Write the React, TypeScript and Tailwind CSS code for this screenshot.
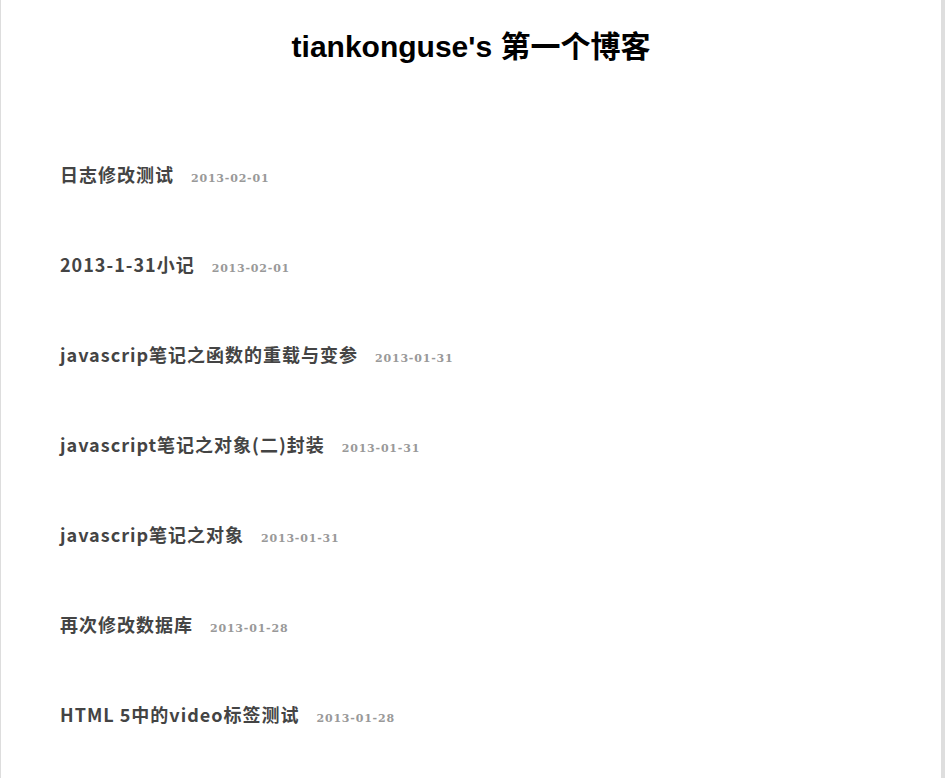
import { memo, VFC } from 'react';

const posts = [
  { title: '日志修改测试', date: '2013-02-01' },
  { title: '2013-1-31小记', date: '2013-02-01' },
  { title: 'javascrip笔记之函数的重载与变参', date: '2013-01-31' },
  { title: 'javascript笔记之对象(二)封装', date: '2013-01-31' },
  { title: 'javascrip笔记之对象', date: '2013-01-31' },
  { title: '再次修改数据库', date: '2013-01-28' },
  { title: 'HTML 5中的video标签测试', date: '2013-01-28' },
];

const PostItem: VFC<{ title: string; date: string }> = memo(({ title, date }) => (
  <li className="flex h-[90px] items-center">
    <div className="flex items-baseline">
      <a
        href="#"
        className="text-[18px] font-bold text-[#444] tracking-[1px] [font-family:'Noto_Sans_CJK_SC','Noto_Sans',sans-serif]"
      >
        {title}
      </a>
      <span className="ml-[17px] text-[11px] font-bold text-[#999] tracking-[0.8px] [font-family:'DejaVu_Serif','Liberation_Serif',serif]">
        {date}
      </span>
    </div>
  </li>
));

export default function App() {
  return (
    <div className="min-h-screen bg-white">
      <div className="min-h-screen w-[945px] border-l border-l-[#ddd] border-r-4 border-r-[#dedede]">
        <h1 className="pt-[28px] text-center text-[30px] leading-[38px] font-bold text-black [font-family:'Liberation_Sans','Noto_Sans_CJK_SC',sans-serif]">
          tiankonguse's 第一个博客
        </h1>
        <ul className="mt-[63px] pl-[59px]">
          {posts.map((post, index) => (
            <PostItem key={index} title={post.title} date={post.date} />
          ))}
        </ul>
      </div>
    </div>
  );
}
